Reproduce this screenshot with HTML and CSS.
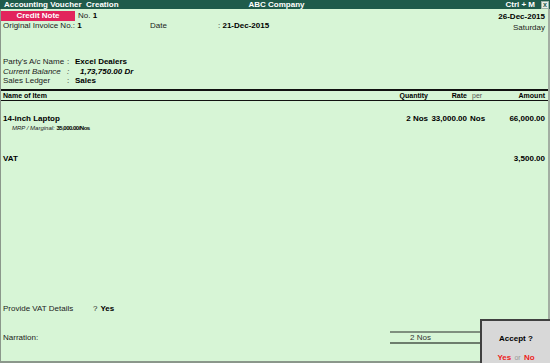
FILE: index.html
```html
<!DOCTYPE html>
<html lang="en">
<head>
    <meta charset="UTF-8">
    <title>Accounting Voucher Creation</title>
    <link rel="stylesheet" href="styles.css">
</head>
<body>

<div class="window">
    <div class="titlebar">
        <span class="title">Accounting Voucher  Creation</span>
        <span class="company">ABC Company</span>
        <span class="shortcut">Ctrl + M <span class="close">x</span></span>
    </div>

    <div class="voucher">
        <!-- voucher head -->
        <div class="head">
            <div class="head-left">
                <div class="line">
                    <span class="vtype">Credit Note</span>
                    <span class="vno">No. <b>1</b></span>
                </div>
                <div class="line">
                    <span class="inv">Original Invoice No.: <b>1</b></span>
                    <span class="date-label">Date</span>
                    <span>: <b>21-Dec-2015</b></span>
                </div>
            </div>
            <div class="head-right">
                <div class="line"><b>26-Dec-2015</b></div>
                <div class="line">Saturday</div>
            </div>
        </div>

        <!-- party details -->
        <div class="party">
            <div class="pline"><span class="plabel">Party's A/c Name</span><span class="colon">:</span><b>Excel Dealers</b></div>
            <div class="pline balance"><span class="plabel">Current Balance</span><span class="colon">:</span><b class="bal">1,73,750.00 Dr</b></div>
            <div class="pline"><span class="plabel">Sales Ledger</span><span class="colon">:</span><b>Sales</b></div>
        </div>

        <!-- inventory -->
        <div class="items">
            <div class="irow ihead">
                <span>Name of Item</span>
                <span class="num">Quantity</span>
                <span class="num">Rate</span>
                <span class="per light">per</span>
                <span class="num">Amount</span>
            </div>
            <div class="irow item">
                <b>14-inch Laptop</b>
                <b class="num">2 Nos</b>
                <b class="num">33,000.00</b>
                <b class="per">Nos</b>
                <b class="num">66,000.00</b>
            </div>
            <div class="mrp"><i>MRP / Marginal:</i> <b>35,000.00/Nos</b></div>
            <div class="irow vat">
                <b>VAT</b>
                <span></span>
                <span></span>
                <span></span>
                <b class="num">3,500.00</b>
            </div>
        </div>

        <!-- footer -->
        <div class="footer">
            <div class="fline"><span class="flabel">Provide VAT Details</span>? <b>Yes</b></div>
            <div class="fline narration">
                <span class="flabel">Narration:</span>
                <span class="total">2 Nos</span>
            </div>
        </div>

        <div class="accept">
            <div class="accept-q">Accept ?</div>
            <div class="accept-a"><b>Yes</b> <span>or</span> <b>No</b></div>
        </div>
    </div>
</div>

</body>
</html>
```

FILE: styles.css
```css
* {
    box-sizing: border-box;
}

body {
    margin: 0;
    font-family: "Liberation Sans", Arial, sans-serif;
    font-size: 8px;
    color: #1c1c1c;
    background-color: #d7f5d6;
}

b {
    color: #000;
}

.window {
    width: 550px;
    height: 363px;
    display: flex;
    flex-direction: column;
}

.titlebar {
    height: 9px;
    line-height: 9px;
    background-color: #1f5b4b;
    color: #fff;
    font-weight: bold;
    display: grid;
    grid-template-columns: 1fr auto 1fr;
    padding: 0 1px 0 4px;
}

.title {
    white-space: pre;
}

.shortcut {
    justify-self: end;
    display: flex;
    align-items: center;
    gap: 6px;
}

.close {
    width: 8px;
    height: 8px;
    line-height: 6px;
    font-size: 7px;
    text-align: center;
    background-color: #e6efe9;
    color: #1f5b4b;
    border: 1px solid #9db3a8;
}

.voucher {
    flex: 1;
    position: relative;
    display: flex;
    flex-direction: column;
    border-left: 1px solid #8b978b;
    border-right: 2px solid #a2aea2;
    border-bottom: 2px solid #8b978b;
}

.head {
    display: flex;
    justify-content: space-between;
    padding: 2px 3px 0 0;
}

.line {
    height: 10px;
    line-height: 10px;
    display: flex;
    white-space: nowrap;
}

.head-left .line + .line {
    padding-left: 2px;
}

.head-right {
    padding-top: 1px;
    text-align: right;
}

.head-right .line {
    justify-content: flex-end;
    height: 10.5px;
}

.vtype {
    width: 74px;
    background-color: #e2245c;
    color: #fff;
    font-weight: bold;
    text-align: center;
}

.vno {
    padding-left: 3px;
}

.inv {
    width: 147px;
}

.date-label {
    width: 68px;
}

.party {
    margin-top: 24px;
    padding-left: 2px;
}

.pline {
    height: 9.5px;
    line-height: 9.5px;
    display: flex;
    white-space: nowrap;
}

.plabel {
    width: 64px;
}

.colon {
    width: 8px;
}

.balance {
    font-style: italic;
}

.bal {
    padding-left: 5px;
}

.items {
    flex: 1;
    margin-top: 3px;
}

.irow {
    display: grid;
    grid-template-columns: 1fr 48px 39px 22px 56px;
    padding: 0 3px 0 2px;
    white-space: nowrap;
}

.ihead {
    height: 12px;
    line-height: 10px;
    font-size: 7px;
    font-weight: bold;
    color: #000;
    border-top: 2px solid #111;
    border-bottom: 1px solid #111;
}

.num {
    text-align: right;
}

.per {
    padding-left: 3px;
}

.light {
    font-weight: normal;
    color: #555;
    padding-left: 5px;
}

.item {
    margin-top: 13px;
    height: 10px;
    line-height: 10px;
}

.mrp {
    padding-left: 11px;
    height: 9px;
    line-height: 9px;
    font-size: 6px;
}

.mrp b {
    letter-spacing: -0.5px;
}

.vat {
    margin-top: 21px;
    height: 10px;
    line-height: 10px;
}

.footer {
    padding: 0 68px 17px 2px;
}

.fline {
    display: flex;
    align-items: center;
    height: 10px;
    white-space: nowrap;
}

.fline b {
    padding-left: 3px;
}

.flabel {
    width: 90px;
}

.narration {
    margin-top: 18px;
    height: 13px;
}

.narration .flabel {
    flex: 1;
}

.total {
    width: 90px;
    height: 13px;
    line-height: 9px;
    padding-left: 20px;
    color: #333;
    border-top: 2px solid #7f8f7f;
    border-bottom: 2px solid #6d7d6d;
}

.accept {
    position: absolute;
    right: -2px;
    bottom: -2px;
    width: 70px;
    height: 44px;
    background-color: #d8d8d8;
    border-left: 2px solid #404040;
    border-top: 2px solid #404040;
    text-align: center;
    display: flex;
    flex-direction: column;
    justify-content: space-between;
    padding: 13px 0 1px;
}

.accept-q {
    font-weight: bold;
    color: #000;
}

.accept-a b {
    color: #ee1c1c;
    padding: 0 1px;
}

.accept-a span {
    color: #999;
    font-size: 7px;
}
```
